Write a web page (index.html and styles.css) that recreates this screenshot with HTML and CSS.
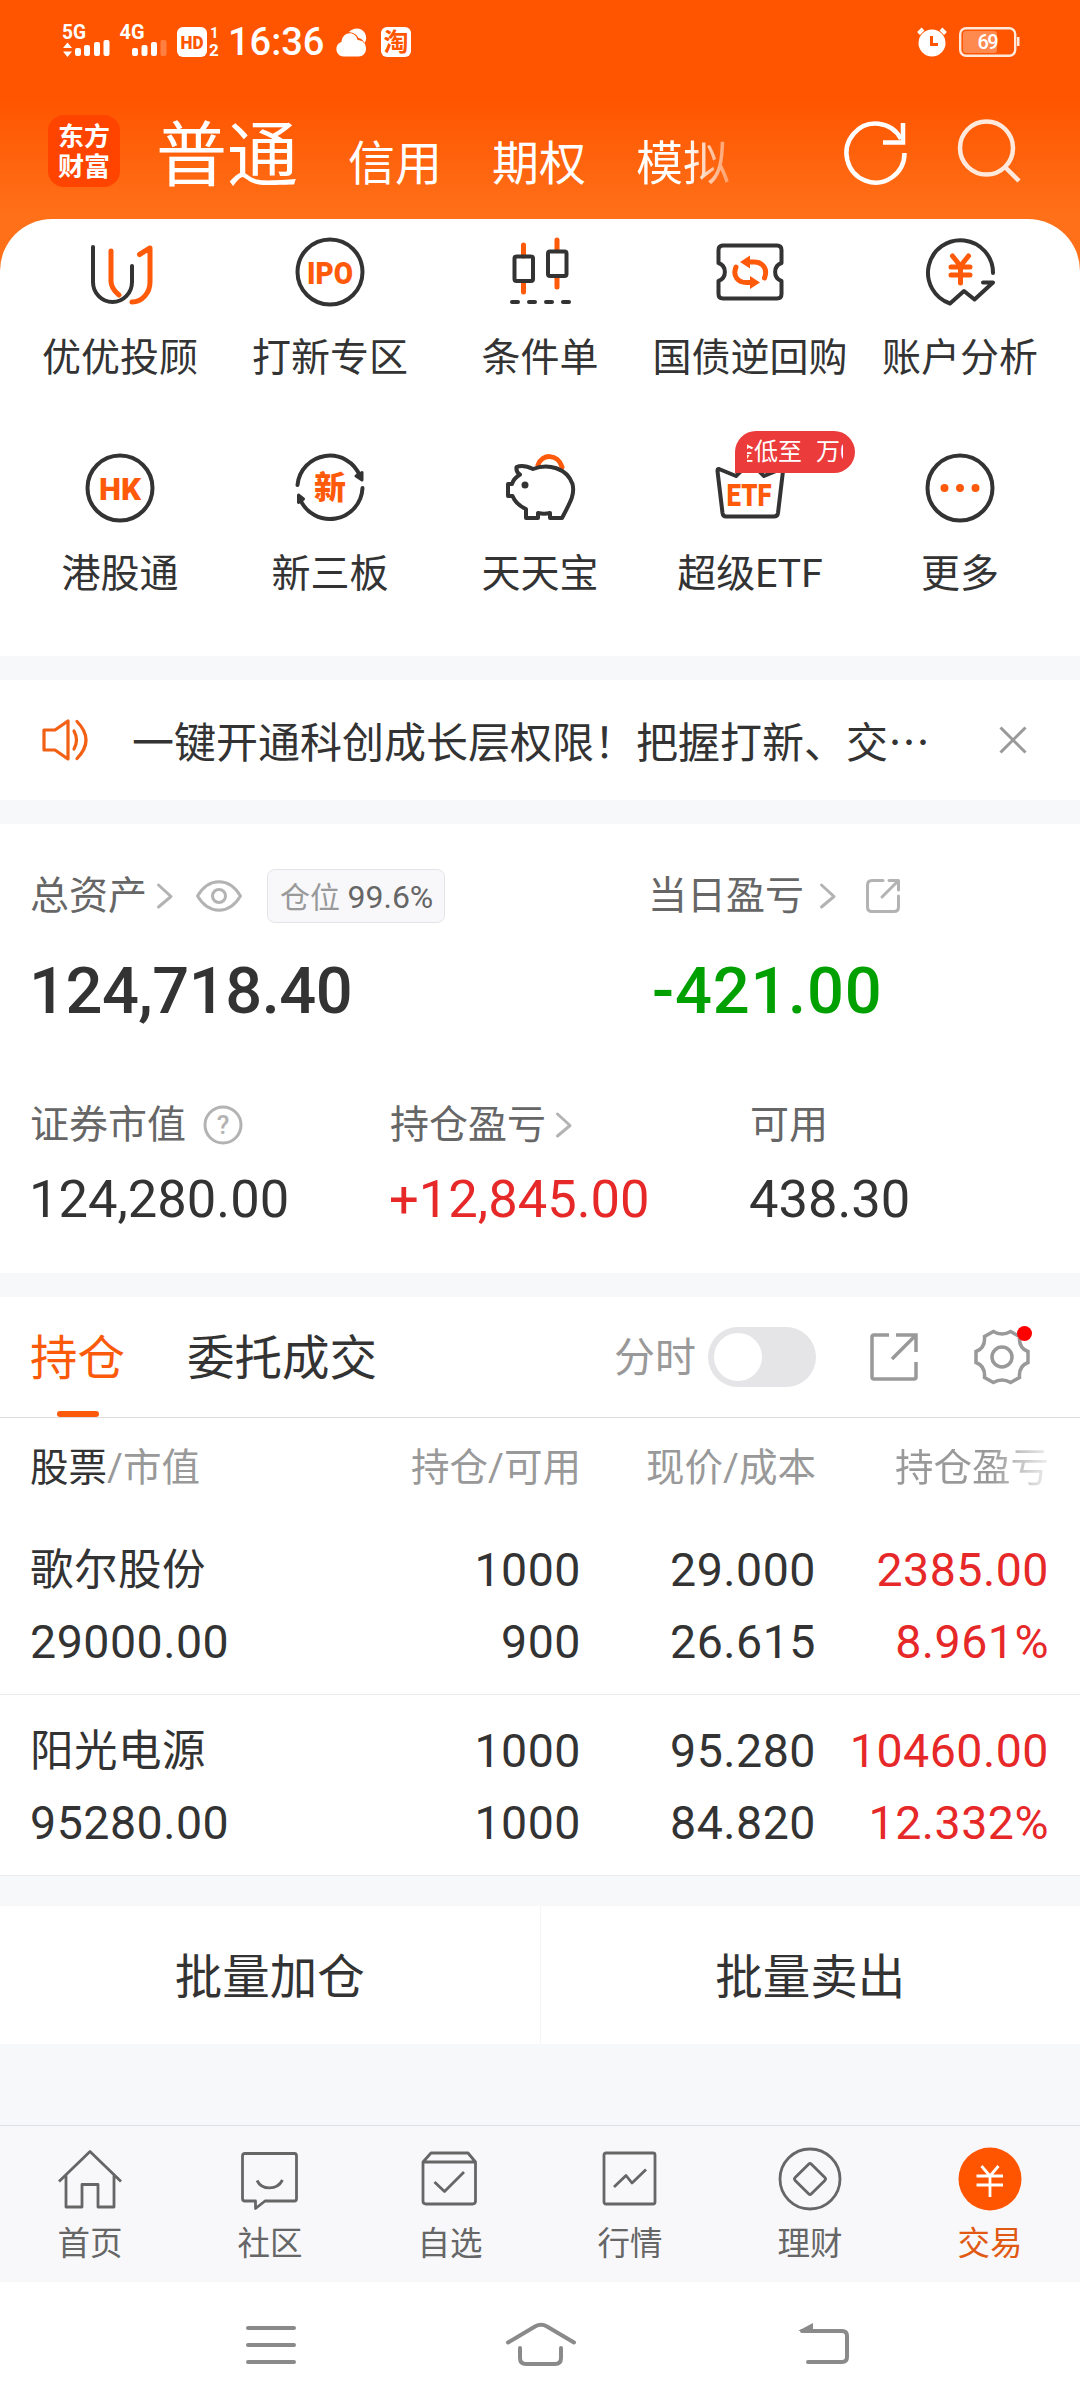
FILE: index.html
```html
<!DOCTYPE html>
<html lang="zh-CN">
<head>
    <meta charset="UTF-8">
    <meta name="viewport" content="width=device-width, initial-scale=1.0">
    <title>东方财富 - 交易</title>
    <link rel="stylesheet" href="styles.css">
</head>
<body>

    <header class="top">
        <div class="status-bar">
            <svg class="status-signal" width="161" height="36" viewBox="0 0 161 36" fill="#fff">
                <text x="2" y="17" font-size="20" font-weight="700" textLength="24" lengthAdjust="spacingAndGlyphs">5G</text>
                <path d="M3 26l4.500-5.500 4.500 5.500zM3 29.500h9L7.500 35z"/>
                <rect x="15" y="26" width="6" height="8" rx="2"/>
                <rect x="24" y="23" width="6" height="11" rx="2"/>
                <rect x="34" y="20" width="6" height="14" rx="2"/>
                <rect x="43.500" y="18" width="6" height="16" rx="2"/>
                <text x="59.500" y="17" font-size="20" font-weight="700" textLength="25" lengthAdjust="spacingAndGlyphs">4G</text>
                <rect x="72" y="26" width="6" height="8" rx="2"/>
                <rect x="81.500" y="23" width="6" height="11" rx="2"/>
                <rect x="91" y="20" width="6" height="14" rx="2"/>
                <rect x="100.500" y="18" width="6" height="16" rx="2" opacity=".25"/>
                <rect x="117" y="5" width="30" height="30" rx="6"/>
                <text x="120.500" y="27" font-size="19" font-weight="900" fill="#ff5500" textLength="23" lengthAdjust="spacingAndGlyphs">HD</text>
                <text x="150" y="16" font-size="15" font-weight="700">1</text>
                <text x="149" y="34" font-size="17" font-weight="700">2</text>
            </svg>
            <span class="clock">16:36</span>
            <svg class="status-cloud" width="31" height="30" viewBox="0 0 31 30" fill="#fff">
                <path d="M13 4C17-.5 25-1 28.500 4.500c2.500 4 2 8 0 10.500-1.500-3-3.500-4.500-6-5C21 6.500 18 4.500 13 4z"/>
                <path d="M7.500 28.500C-1 28-2 16 5.500 14 6 3 20 2.500 21.500 12c5 0 8.500 3.500 8.500 8.500 0 4.500-3 8-7.500 8z"/>
            </svg>
            <span class="status-app">淘</span>
            <svg class="status-alarm" width="30" height="30" viewBox="0 0 30 30">
                <path d="M1.500 6.500L6 2M28.500 6.500L24 2" stroke="#fff" stroke-width="4"/>
                <circle cx="15" cy="16" r="13.500" fill="#fff"/>
                <path d="M14.500 9v8.500h6.500" stroke="#ff5500" stroke-width="3" fill="none"/>
            </svg>
            <svg class="status-battery" width="61" height="30" viewBox="0 0 61 30">
                <rect x="1.200" y="1.200" width="55" height="27.600" rx="6" fill="none" stroke="#ffe9dc" stroke-width="2.400"/>
                <rect x="4" y="4" width="34" height="22" rx="3" fill="#ff8a50"/>
                <rect x="58" y="10" width="2.500" height="9" fill="#ffe9dc"/>
                <text x="18.500" y="22" font-size="20" font-weight="500" fill="#fff" textLength="21">69</text>
            </svg>
        </div>

        <div class="account-bar">
            <div class="logo">东方<br>财富</div>
            <nav class="account-tabs">
                <span class="account-tab active">普通</span>
                <span class="account-tab">信用</span>
                <span class="account-tab">期权</span>
                <span class="account-tab faded">模拟</span>
            </nav>
            <svg class="icon-refresh" width="66" height="66" viewBox="0 0 66 66" fill="none" stroke="#fff" stroke-width="4.500">
                <path d="M61.500 34A29 29.500 0 1 1 58 20"/>
                <path d="M60 4v19.500H40"/>
            </svg>
            <svg class="icon-search" width="66" height="66" viewBox="0 0 66 66" fill="none" stroke="#ffe9dc" stroke-width="4.500">
                <circle cx="29.500" cy="29" r="26.500"/>
                <path d="M48 48l14 14"/>
            </svg>
        </div>
    </header>

    <section class="functions">
        <div class="function">
            <svg class="function-icon" viewBox="0 0 72 72">
                <path class="dark" d="M9 11V46A19.500 20 0 0 0 48 46V30"/>
                <path class="orange" d="M27 15V45C27 51 30 55 35 59M48 66C58 66 66 57 66 46V12L55.500 18.500"/>
            </svg>
            <span>优优投顾</span>
        </div>
        <div class="function">
            <svg class="function-icon" viewBox="0 0 72 72">
                <circle class="dark" cx="36" cy="36" r="32.500"/>
                <text x="36" y="47.500" font-size="32" textLength="46" lengthAdjust="spacingAndGlyphs">IPO</text>
            </svg>
            <span>打新专区</span>
        </div>
        <div class="function">
            <svg class="function-icon" viewBox="0 0 72 72">
                <path class="orange" d="M19.500 9v11M19.500 46v10M53 4v10M53 41v10"/>
                <rect class="dark" x="10.500" y="20.500" width="18.500" height="24.500" rx="2"/>
                <rect class="dark" x="44" y="15.500" width="18.500" height="24.500" rx="2"/>
                <path class="dark" d="M8 66h6M25 66h6M42 66h6M59 66h6"/>
            </svg>
            <span>条件单</span>
        </div>
        <div class="function">
            <svg class="function-icon" viewBox="0 0 72 72">
                <path class="dark" d="M8 9.500H63Q67.500 9.500 67.500 14V27C59 30 59 42 67.500 45V58Q67.500 62.500 63 62.500H9Q4.500 62.500 4.500 58V45C13 42 13 30 4.500 27V14Q4.500 9.500 9 9.500Z"/>
                <path class="orange" d="M22 31C18 41 25 46.500 32 46.500H38M34 26H40C49 26 54 33 50.500 42"/>
                <path class="solid" d="M36 19.500V32.500L26 26ZM36 40V53L46 46.500Z"/>
            </svg>
            <span>国债逆回购</span>
        </div>
        <div class="function">
            <svg class="function-icon" viewBox="0 0 72 72">
                <path class="dark" d="M69 37A32.500 32.500 0 1 0 26 67.500L40 55L50.500 63.500L69 46.500H59"/>
                <path class="orange" d="M28.500 20L36.500 30L44.500 20M27 31H46M27 39H46M36.500 31V47"/>
            </svg>
            <span>账户分析</span>
        </div>
        <div class="function">
            <svg class="function-icon" viewBox="0 0 72 72">
                <circle class="dark" cx="36" cy="36" r="32.500"/>
                <text x="36" y="47.500" font-size="32" textLength="42" lengthAdjust="spacingAndGlyphs">HK</text>
            </svg>
            <span>港股通</span>
        </div>
        <div class="function">
            <svg class="function-icon" viewBox="0 0 72 72">
                <path class="dark" d="M3.500 33A32.500 32.500 0 0 1 66 24M68.500 36A32.500 32.500 0 0 1 6 47"/>
                <path class="arrow" d="M62 24L68 20.500V28ZM4.500 43L9.500 47L4.500 50.500Z"/>
                <text x="36" y="47" font-size="32">新</text>
            </svg>
            <span>新三板</span>
        </div>
        <div class="function">
            <svg class="function-icon" viewBox="0 0 72 72">
                <path class="orange" d="M34 13C38 1.500 54 1.500 58 15"/>
                <path class="dark" d="M12.500 15C18 12.500 23 14 29 17C44 11 63 16 68.500 32C71 42 67 49 58 66H46V61C42 62 38 62 34 61V66H22V57C15 54 11 50 8.500 44H4V32H8C9 28 12 25 16 22.500C13 21 12 19 12.500 15Z"/>
                <circle cx="21" cy="33" r="3.500" fill="#333"/>
            </svg>
            <span>天天宝</span>
        </div>
        <div class="function">
            <svg class="function-icon" viewBox="0 0 72 72">
                <path class="dark" d="M5 17L22 24L36 10L50 24L67 17Q69.500 16.500 69 19L64 61Q63.500 64.500 60 64.500H12Q9 64.500 8.500 61L3.500 19Q3.500 16.500 5 17Z"/>
                <text x="35" y="54" font-size="32" textLength="45" lengthAdjust="spacingAndGlyphs">ETF</text>
            </svg>
            <span>超级ETF</span>
            <div class="promo"><div class="promo-text">金低至<i></i>万0.5</div></div>
        </div>
        <div class="function">
            <svg class="function-icon" viewBox="0 0 72 72">
                <circle class="dark" cx="36" cy="36" r="32.500"/>
                <path class="solid" d="M16.500 36a4 4 0 1 0 8 0a4 4 0 1 0-8 0M32 36a4 4 0 1 0 8 0a4 4 0 1 0-8 0M47.500 36a4 4 0 1 0 8 0a4 4 0 1 0-8 0"/>
            </svg>
            <span>更多</span>
        </div>
    </section>

    <section class="notice">
        <svg width="48" height="44" viewBox="0 0 48 44" fill="none" stroke="#f26014" stroke-width="3.200" stroke-linejoin="round" stroke-linecap="round">
            <path d="M2 12h11L26 3v38L13 32H2z"/>
            <path d="M32 13q5 9 0 18M35 3.500q18 18.500 0 37"/>
        </svg>
        <p>一键开通科创成长层权限！把握打新、交…</p>
        <svg width="28" height="28" viewBox="0 0 28 28" fill="none" stroke="#999" stroke-width="3">
            <path d="M1.500 1.500l25 25M26.500 1.500l-25 25"/>
        </svg>
    </section>

    <section class="assets">
        <div class="asset-main">
            <div class="asset total">
                <div class="asset-label">
                    总资产
                    <svg class="chevron" width="16" height="26" viewBox="0 0 16 26"><path d="M1.500 2L14 13.500L1.500 24"/></svg>
                    <svg class="eye" width="46" height="32" viewBox="0 0 46 32"><path d="M1.500 16C13-3 33-3 44.500 16C33 35 13 35 1.500 16Z"/><circle cx="23" cy="16" r="6.500"/></svg>
                    <span class="position">仓位 <b>99.6%</b></span>
                </div>
                <div class="asset-value">124,718.40</div>
            </div>
            <div class="asset today">
                <div class="asset-label">
                    当日盈亏
                    <svg class="chevron" width="16" height="26" viewBox="0 0 16 26"><path d="M1.500 2L14 13.500L1.500 24"/></svg>
                    <svg class="share" width="34" height="34" viewBox="0 0 34 34"><path d="M17 1.500H6Q1.500 1.500 1.500 6V28Q1.500 32.500 6 32.500H28Q32.500 32.500 32.500 28V17M23 1.500H32.500V11M32 2L16 18"/></svg>
                </div>
                <div class="asset-value down">-421.00</div>
            </div>
        </div>
        <div class="asset-sub">
            <div class="asset">
                <div class="asset-label">
                    证券市值
                    <svg class="help" width="40" height="40" viewBox="0 0 40 40"><circle cx="20" cy="20" r="18"/><text x="20" y="29" font-size="26">?</text></svg>
                </div>
                <div class="asset-value">124,280.00</div>
            </div>
            <div class="asset">
                <div class="asset-label">
                    持仓盈亏
                    <svg class="chevron" width="16" height="26" viewBox="0 0 16 26"><path d="M1.500 2L14 13.500L1.500 24"/></svg>
                </div>
                <div class="asset-value up">+12,845.00</div>
            </div>
            <div class="asset">
                <div class="asset-label">可用</div>
                <div class="asset-value">438.30</div>
            </div>
        </div>
    </section>

    <section class="holdings">
        <div class="holding-tabs">
            <span class="holding-tab active">持仓</span>
            <span class="holding-tab">委托成交</span>
            <span class="switch-label">分时</span>
            <span class="switch"></span>
            <svg class="export" width="48" height="48" viewBox="0 0 48 48"><path d="M19 2H4Q2 2 2 4V44Q2 46 4 46H44Q46 46 46 44V29M26 2H46V19M45.500 2.500L22 26"/></svg>
            <div class="settings">
                <svg width="56" height="56" viewBox="0 0 56 56">
                    <path d="M19.400 2.500Q28 7.500 36.600 2.500L45.500 7.500Q44.500 19 54 22.500V33.500Q44.500 37 45.500 48.500L36.600 53.500Q28 48.500 19.400 53.500L10.500 48.500Q11.500 37 2 33.500V22.500Q11.500 19 10.500 7.500Z"/>
                    <circle cx="28" cy="28" r="10"/>
                </svg>
                <span class="red-dot"></span>
            </div>
        </div>

        <div class="row row-head">
            <span><em>股票</em>/市值</span>
            <span>持仓/可用</span>
            <span>现价/成本</span>
            <span class="head-fade">持仓盈亏</span>
        </div>
        <div class="row">
            <span class="name">歌尔股份</span>
            <span>1000</span>
            <span>29.000</span>
            <span class="up">2385.00</span>
            <span>29000.00</span>
            <span>900</span>
            <span>26.615</span>
            <span class="up">8.961%</span>
        </div>
        <div class="row">
            <span class="name">阳光电源</span>
            <span>1000</span>
            <span>95.280</span>
            <span class="up">10460.00</span>
            <span>95280.00</span>
            <span>1000</span>
            <span>84.820</span>
            <span class="up">12.332%</span>
        </div>
    </section>

    <section class="batch">
        <button>批量加仓</button>
        <button>批量卖出</button>
    </section>

    <nav class="tab-bar">
        <div class="tab">
            <svg viewBox="0 0 64 64"><path d="M1 34.500L32 4.500L63 34.500M8 28.500V60H24V37.500H40V60H56V28.500"/></svg>
            <span>首页</span>
        </div>
        <div class="tab">
            <svg viewBox="0 0 64 64"><path d="M7 6.500H56.500Q58.500 6.500 58.500 9V51.500Q58.500 54 56.500 54H27L17.500 61.500V54H7Q4.500 54 4.500 51.500V9Q4.500 6.500 7 6.500ZM19 33.500C24 43.500 39 43.500 44.500 33"/></svg>
            <span>社区</span>
        </div>
        <div class="tab">
            <svg viewBox="0 0 64 64"><path d="M5 15L13 6H50L57.500 15V54Q57.500 57 54.500 57H8Q5 57 5 54ZM5 15H57.500M16.500 35L26.500 44.500L46 25"/></svg>
            <span>自选</span>
        </div>
        <div class="tab">
            <svg viewBox="0 0 64 64"><rect x="6" y="6" width="51" height="51" rx="2"/><path d="M16 40L28 28.500L34 36L48 22.500"/></svg>
            <span>行情</span>
        </div>
        <div class="tab">
            <svg viewBox="0 0 64 64"><circle cx="32" cy="32" r="30"/><rect x="20.500" y="20.500" width="23" height="23" rx="2" transform="rotate(45 32 32)"/></svg>
            <span>理财</span>
        </div>
        <div class="tab active">
            <svg viewBox="0 0 64 64"><circle cx="32" cy="32" r="31.500"/><path d="M23.500 19L32 29L40.500 19M18.500 29H45M18.500 38H45M32 29V50"/></svg>
            <span>交易</span>
        </div>
    </nav>

    <footer class="system-nav">
        <svg width="52" height="46" viewBox="0 0 52 46"><path d="M3 6h46M3 23h46M3 40h46"/></svg>
        <svg class="home" width="72" height="46" viewBox="0 0 72 46"><path d="M3 20.500L30 4.500Q36 1 42 4.500L69 20.500M15 26V36Q15 42 21 42H50Q56 42 56 36V26"/></svg>
        <svg class="back" width="52" height="46" viewBox="0 0 52 46"><path d="M4 9H44Q49 9 49 14V35Q49 40 44 40H10"/><path class="head" d="M0 9L15 1V9Z"/></svg>
    </footer>

</body>
</html>
```
FILE: styles.css
```css
* {
    box-sizing: border-box;
}

body {
    margin: 0;
    width: 1080px;
    height: 2408px;
    overflow: hidden;
    display: flex;
    flex-direction: column;
    background-color: #f7f8fa;
    color: #333;
    font-family: Roboto, "Noto Sans CJK SC", sans-serif;
    line-height: 1;
}

svg {
    display: block;
    flex: none;
    overflow: visible;
}

/* header */
.top {
    height: 275px;
    margin-bottom: -56px;
    background: linear-gradient(#ff5500 0, #ff5500 100px, #ff7019 215px, #ff7019 100%);
    color: #fff;
    flex: none;
}

.status-bar {
    height: 84px;
    padding: 22px 60px 0 60px;
    display: flex;
    align-items: flex-start;
}

.clock {
    font-size: 38px;
    font-weight: 500;
    line-height: 41px;
    margin-left: 7px;
    width: 108px;
    white-space: nowrap;
}

.status-cloud {
    margin-top: 6px;
}

.status-app {
    width: 30px;
    height: 30px;
    margin: 5px 0 0 14px;
    border-radius: 6px;
    background-color: #fff;
    color: #ff5500;
    font-size: 25px;
    font-weight: bold;
    line-height: 31px;
    text-align: center;
}

.status-alarm {
    margin: 5px 12px 0 auto;
}

.status-battery {
    margin-top: 5px;
}

.account-bar {
    display: flex;
    height: 135px;
    padding: 0 57px 0 48px;
}

.logo {
    width: 72px;
    height: 72px;
    margin-top: 31px;
    padding-top: 7px;
    border-radius: 16px;
    background-color: #ff4400;
    font-size: 26px;
    font-weight: bold;
    line-height: 30px;
    text-align: center;
}

.account-tabs {
    display: flex;
    align-items: baseline;
    height: 100px;
    margin-left: 36px;
    padding-top: 2px;
    flex: 1;
}

.account-tab {
    font-size: 47px;
    line-height: 100px;
    margin-right: 50px;
    padding-top: 1px;
}

.account-tab.active {
    font-size: 71px;
    margin-right: 50px;
    line-height: 138px;
}

.account-tab.faded {
    background: linear-gradient(90deg, #fff 55%, rgba(255, 255, 255, 0.35));
    -webkit-background-clip: text;
    background-clip: text;
    color: transparent;
}

.icon-refresh {
    margin: 35px 48px 0 0;
}

.icon-search {
    margin-top: 35px;
}

/* function grid */
.functions {
    height: 437px;
    padding: 17px 15px 0;
    display: grid;
    grid-template-columns: repeat(5, 210px);
    grid-auto-rows: 216px;
    background-color: #fff;
    border-radius: 52px 52px 0 0;
    flex: none;
}

.function {
    position: relative;
    display: flex;
    flex-direction: column;
    align-items: center;
    font-size: 39px;
    white-space: nowrap;
}

.function span {
    line-height: 60px;
    margin-top: 20px;
}

.function-icon {
    width: 72px;
    height: 72px;
    fill: none;
    stroke-linecap: round;
    stroke-linejoin: round;
}

.function-icon .dark {
    stroke: #333;
    stroke-width: 4;
}

.function-icon .orange {
    stroke: #ff5a0a;
    stroke-width: 5;
}

.function-icon .solid {
    fill: #ff5a0a;
}

.function-icon .arrow {
    fill: #333;
    stroke: #333;
    stroke-width: 3;
}

.function-icon text {
    fill: #ff5a0a;
    font-weight: 900;
    text-anchor: middle;
}

.promo {
    position: absolute;
    top: -21px;
    left: 90px;
    width: 120px;
    height: 42px;
    padding: 0 12px;
    border-radius: 21px 21px 21px 0;
    background-color: #eb3b3b;
}

.promo-text {
    overflow: hidden;
    color: #fff;
    font-size: 24px;
    line-height: 43px;
    text-indent: -17px;
}

.promo-text i {
    display: inline-block;
    width: 14px;
}

/* notice */
.notice {
    height: 120px;
    margin: 24px 0;
    padding: 0 53px 0 42px;
    display: flex;
    align-items: center;
    background-color: #fff;
    flex: none;
}

.notice p {
    margin: 0 auto 0 42px;
    font-family: "Noto Sans CJK SC", sans-serif;
    font-size: 42px;
    line-height: 60px;
}

/* assets */
.assets {
    height: 449px;
    padding: 42px 30px 0;
    background-color: #fff;
    flex: none;
}

.asset-main {
    display: flex;
    height: 229px;
}

.asset-main .total {
    width: 618px;
}

.asset-sub {
    display: grid;
    grid-template-columns: repeat(3, 360px);
}

.asset-label {
    display: flex;
    align-items: center;
    height: 60px;
    color: #666;
    font-size: 39px;
}

.asset-label svg {
    fill: none;
    stroke: #b3b3b3;
    stroke-width: 3;
    stroke-linecap: round;
    stroke-linejoin: round;
}

.asset-label .chevron {
    margin-left: 10px;
}

.today .chevron {
    margin-left: 16px;
}

.asset-label .eye {
    margin-left: 23px;
}

.asset-label .share {
    margin-left: 30px;
}

.asset-label .help {
    margin-left: 17px;
}

.asset-label .help text {
    fill: #b3b3b3;
    stroke: none;
    text-anchor: middle;
    font-weight: 500;
}

.position {
    height: 54px;
    margin-left: 25px;
    padding: 0 11px 0 12px;
    border: 1px solid #e4e4e6;
    border-radius: 8px;
    background-color: #f8f8fb;
    color: #999;
    font-size: 30px;
    line-height: 54px;
    white-space: nowrap;
}

.position b {
    color: #666;
    font-size: 32px;
    font-weight: 400;
}

.asset-value {
    font-size: 52.5px;
    line-height: 60px;
    margin-top: 14px;
    margin-left: -1px;
}

.asset-main .asset-value {
    font-size: 65px;
    font-weight: 500;
    letter-spacing: -0.5px;
    line-height: 70px;
    margin-top: 30px;
}

.asset-main .asset-value.down {
    letter-spacing: 0.8px;
    margin-left: 4px;
}

.up {
    color: #e62828;
}

.down {
    color: #00a000;
}

/* holdings */
.holdings {
    margin-top: 24px;
    height: 579px;
    background-color: #fff;
    flex: none;
}

.holding-tabs {
    display: flex;
    align-items: center;
    height: 121px;
    padding: 0 50px 0 30px;
    border-bottom: 1px solid #dedede;
}

.holding-tab {
    position: relative;
    font-size: 47.5px;
    height: 120px;
    line-height: 125px;
    margin-right: 62px;
}

.holding-tab.active {
    color: #fa5a0a;
}

.holding-tab.active::after {
    content: "";
    position: absolute;
    left: 27px;
    bottom: 0;
    width: 42px;
    height: 6px;
    border-radius: 3px;
    background-color: #fa5a0a;
}

.switch-label {
    margin-left: auto;
    padding-top: 3px;
    color: #999;
    font-size: 41px;
}

.switch {
    width: 108px;
    height: 60px;
    margin-left: 12px;
    padding: 6px;
    border-radius: 30px;
    background-color: #e5e5e7;
}

.switch::before {
    content: "";
    display: block;
    width: 48px;
    height: 48px;
    border-radius: 50%;
    background-color: #fff;
}

.export,
.settings svg {
    fill: none;
    stroke: #999;
    stroke-width: 3.5;
}

.export {
    margin-left: 54px;
}

.settings {
    position: relative;
    margin-left: 56px;
}

.red-dot {
    position: absolute;
    top: -3px;
    right: -2px;
    width: 15px;
    height: 15px;
    border-radius: 50%;
    background-color: #ff0000;
}

.row {
    display: grid;
    grid-template-columns: 1fr 235px 235px 233px;
    grid-auto-rows: 72px;
    align-content: center;
    align-items: center;
    height: 181px;
    padding: 5px 31px 0 30px;
    border-bottom: 1px solid #ebebeb;
    font-size: 46.5px;
    letter-spacing: 0.5px;
    text-align: right;
}

.row span:nth-child(4n + 1) {
    text-align: left;
}

.row .name {
    font-size: 43.5px;
}

.row-head {
    height: 96px;
    padding-top: 5px;
    border-bottom: 0;
    color: #999;
    font-size: 38.5px;
    letter-spacing: 0;
}

.row-head em {
    color: #333;
    font-style: normal;
}

.row-head .head-fade {
    background: linear-gradient(90deg, #999 75%, #eee);
    -webkit-background-clip: text;
    background-clip: text;
    color: transparent;
}

/* batch buttons */
.batch {
    display: flex;
    height: 138px;
    margin-top: 30px;
    background-color: #fff;
    flex: none;
}

.batch button {
    flex: 1;
    border: none;
    background: none;
    padding: 6px 0 0;
    color: #333;
    font-family: inherit;
    font-size: 47.5px;
    line-height: 60px;
}

.batch button:first-child {
    border-right: 1px solid #f5f5f7;
}

/* bottom tabs */
.tab-bar {
    display: flex;
    height: 157px;
    margin-top: auto;
    border-top: 1px solid #dfe2e4;
    background-color: #f8f8fb;
    flex: none;
}

.tab {
    width: 180px;
    padding-top: 21px;
    display: flex;
    flex-direction: column;
    align-items: center;
    color: #666;
    font-size: 32.5px;
}

.tab svg {
    width: 64px;
    height: 64px;
    fill: none;
    stroke: #666;
    stroke-width: 2.8;
    stroke-linejoin: round;
}

.tab span {
    line-height: 40px;
    margin-top: 13px;
}

.tab.active {
    color: #e05a14;
}

.tab.active circle {
    fill: #ff5500;
    stroke: none;
}

.tab.active path {
    stroke: #fff;
    stroke-linejoin: miter;
}

.system-nav {
    display: flex;
    height: 126px;
    padding: 40px 0 0 245px;
    background-color: #fff;
    flex: none;
}

.system-nav svg {
    fill: none;
    stroke: #8a8a8a;
    stroke-width: 4;
    stroke-linecap: round;
}

.system-nav .home {
    margin-left: 208px;
}

.system-nav .back {
    margin-left: 221px;
}

.system-nav .head {
    fill: #8a8a8a;
    stroke: none;
}
```
